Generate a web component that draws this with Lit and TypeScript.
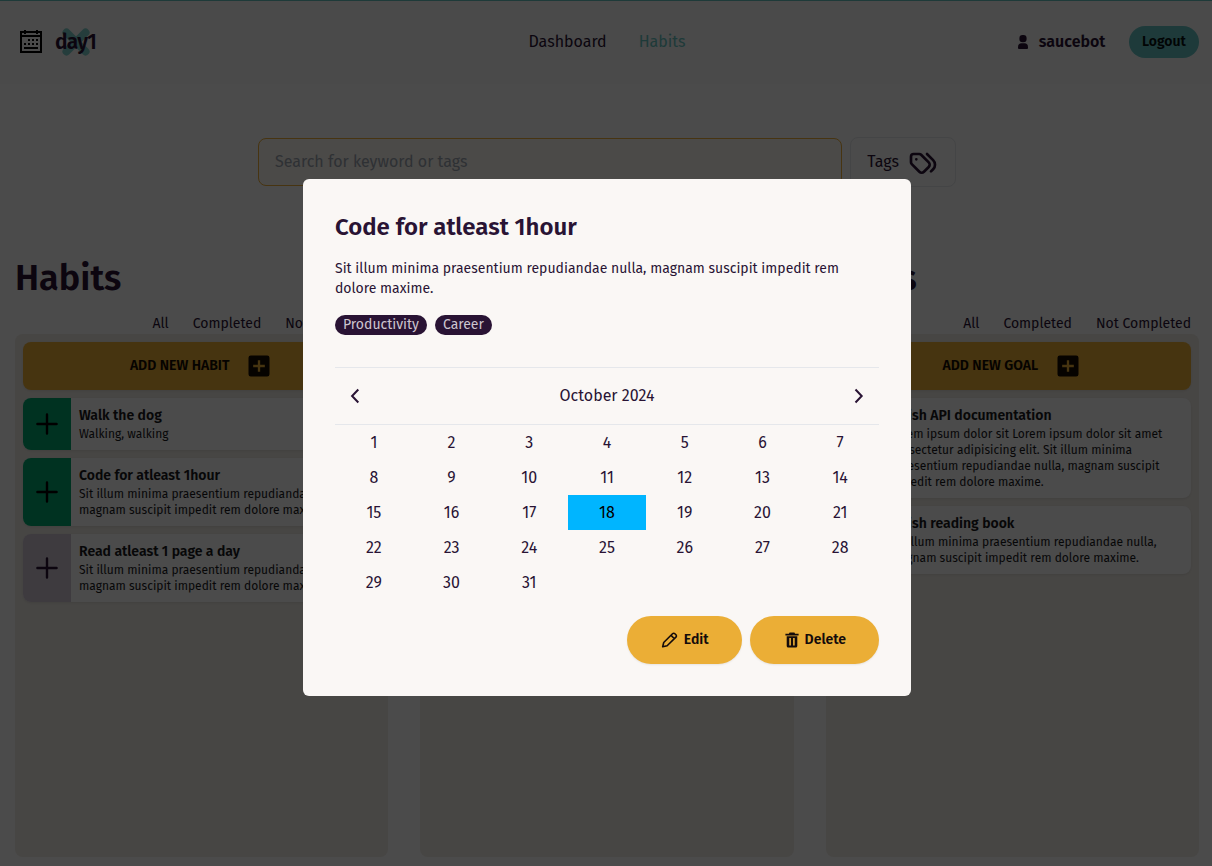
import { LitElement, html, css, svg } from "lit";
import { customElement } from "lit/decorators.js";

const LOREM = "Sit illum minima praesentium repudiandae nulla, magnam suscipit impedit rem dolore maxime.";

interface Entry { title: string; text: string; done: boolean; }

const habits: Entry[] = [
  { title: "Walk the dog", text: "Walking, walking", done: true },
  { title: "Code for atleast 1hour", text: LOREM, done: true },
  { title: "Read atleast 1 page a day", text: LOREM, done: false },
];
const goals: Entry[] = [
  {
    title: "Finish API documentation",
    text: "Lorem ipsum dolor sit Lorem ipsum dolor sit amet consectetur adipisicing elit. " + LOREM,
    done: false,
  },
  { title: "Finish reading book", text: LOREM, done: false },
];

const columns = [
  { name: "Habits", add: "Add new habit", entries: habits },
  { name: "Dailies", add: "Add new daily", entries: [] as Entry[] },
  { name: "Goals", add: "Add new goal", entries: goals },
];

const dots = [[8, 9], [12, 9], [16, 9], [4, 13], [8, 13], [12, 13], [16, 13]];

const calendarIcon = html`<svg width="22" height="23" viewBox="0 0 22 23" shape-rendering="crispEdges">
  <path fill-rule="evenodd" d="M0 1h22v22H0zM2 3v2h18V3zM2 7v14h18V7z" />
  <path d="M4 0h2v4H4zM16 0h2v4h-2zM4 17h14v2H4z" />
  ${dots.map(([x, y]) => svg`<rect x=${x} y=${y} width="2" height="2" />`)}
</svg>`;

const userIcon = html`<svg width="16" height="16" viewBox="0 0 16 16" fill="currentColor">
  <rect x="4.4" y="1" width="7.2" height="7.2" rx="3.2" />
  <path d="M3 13.2C3 10.4 4.5 9.3 6.2 9.3h3.6c1.7 0 3.2 1.1 3.2 3.9v.8a1 1 0 0 1-1 1H4a1 1 0 0 1-1-1z" />
</svg>`;

const tagsIcon = html`<svg width="32" height="32" viewBox="0 0 24 24" fill="none" stroke="currentColor" stroke-width="2" stroke-linecap="round" stroke-linejoin="round">
  <path d="M3 8v4.172a2 2 0 0 0 .586 1.414l5.71 5.71a2.41 2.41 0 0 0 3.408 0l3.592-3.592a2.41 2.41 0 0 0 0-3.408l-5.71-5.71A2 2 0 0 0 9.172 6H5a2 2 0 0 0-2 2z" />
  <path d="M18 19l1.592-1.592a4.82 4.82 0 0 0 0-6.816L15 6M7 10h-.01" />
</svg>`;

const plusBoxIcon = html`<svg width="28" height="28" viewBox="0 0 24 24" fill="currentColor">
  <path d="M5 3h14a2 2 0 0 1 2 2v14a2 2 0 0 1-2 2H5a2 2 0 0 1-2-2V5a2 2 0 0 1 2-2zm6 4v4H7v2h4v4h2v-4h4v-2h-4V7z" />
</svg>`;

const plusIcon = html`<svg width="24" height="24" viewBox="0 0 24 24" fill="none" stroke="currentColor" stroke-width="2.4" stroke-linecap="round">
  <path d="M12 2.4v19.2M2.4 12h19.2" />
</svg>`;

const chevron = (d: string) => html`<svg width="16" height="16" viewBox="0 0 16 16" fill="none" stroke="currentColor" stroke-width="2">
  <path d=${d} />
</svg>`;

const pencilIcon = html`<svg width="19" height="19" viewBox="0 0 24 24" fill="none" stroke="currentColor" stroke-width="2" stroke-linejoin="round">
  <path d="M3.4 19.9l1.3-5.4L15.8 3.4a2.1 2.1 0 0 1 3 0l1.3 1.3a2.1 2.1 0 0 1 0 3L9 18.6zM14 5.6l3.9 3.9" />
</svg>`;

const trashIcon = html`<svg width="16" height="16" viewBox="0 0 16 16" fill="currentColor">
  <path fill-rule="evenodd" d="M5.6 0.6h4.8l.7 1.2h3.5v1.7H1.4V1.8h3.5zM2.7 4.3h10.6v9.7a1.6 1.6 0 0 1-1.6 1.6H4.3a1.6 1.6 0 0 1-1.6-1.6zM5.3 6v7.6h1.6V6zM9.1 6v7.6h1.6V6z" />
</svg>`;

@customElement("app-root")
export class AppRoot extends LitElement {
  static styles = css`
    :host {
      display: block;
      position: relative;
      height: 866px;
      overflow: hidden;
      background: #fafafa;
      color: #291334;
      font: 16px/24px "Fira Sans", "Roboto", sans-serif;
    }
    * { box-sizing: border-box; }
    svg { display: block; flex: none; }
    h1, h2, h3, p { margin: 0; font-weight: 600; }
    p { font-weight: 400; }
    button {
      font: inherit;
      color: inherit;
      border: 0;
      padding: 0;
      background: none;
    }
    .page { height: 100%; display: flex; flex-direction: column; }
    .header {
      height: 84px;
      flex: none;
      display: grid;
      grid-template-columns: 1fr auto 1fr;
      align-items: center;
      padding: 0 13px 2px 20px;
      border-top: 1px solid #66c3bf;
      background: #f7f7f7;
    }
    .brand { display: flex; align-items: center; gap: 13px; color: #000; }
    .logo {
      position: relative;
      isolation: isolate;
      font-size: 21px;
      line-height: 28px;
      font-weight: 600;
      letter-spacing: -0.75px;
      color: #291334;
    }
    .cross { position: absolute; z-index: -1; left: 7px; top: 0; color: #7dccc9; }
    .nav { display: flex; gap: 32px; margin-right: 5px; }
    .active { color: #66c3bf; }
    .account { display: flex; align-items: center; justify-content: flex-end; }
    .user { display: flex; align-items: center; gap: 8px; font-weight: 600; margin-right: 23.6px; }
    .logout {
      height: 32px;
      width: 70px;
      border-radius: 16px;
      background: #66c3c3;
      color: #050f10;
      font-size: 14px;
      font-weight: 600;
    }
    .search { display: flex; align-items: center; gap: 8px; width: 698px; margin: 53px 0 71px 258px; }
    .field {
      flex: 1;
      height: 48px;
      min-width: 0;
      padding: 0 16px 2px;
      border: 1px solid #eeaf3a;
      border-radius: 8px;
      background: #faf7f0;
      font: inherit;
    }
    .field::placeholder { color: #9ca3af; opacity: 1; }
    .tags {
      display: flex;
      align-items: center;
      gap: 8px;
      height: 50px;
      padding: 0 16px;
      border: 1px solid #e5e7eb;
      border-radius: 8px;
    }
    .columns {
      flex: 1;
      min-height: 0;
      display: grid;
      grid-template-columns: repeat(3, 1fr);
      gap: 32px;
      padding: 0 13px 9px 15px;
    }
    .column { display: flex; flex-direction: column; min-width: 0; }
    .heading { font-size: 36px; line-height: 40px; }
    .tabs {
      display: flex;
      justify-content: flex-end;
      gap: 24px;
      padding: 16px 8px 0;
      font-size: 14px;
      line-height: 20px;
    }
    .panel {
      flex: 1;
      display: flex;
      flex-direction: column;
      gap: 8px;
      padding: 8px;
      border-radius: 8px;
      background: #ede9e3;
    }
    .add {
      display: flex;
      align-items: center;
      justify-content: center;
      gap: 16px;
      height: 48px;
      border-radius: 8px;
      background: #ebae36;
      color: #140b01;
      font-size: 14px;
      font-weight: 600;
      text-transform: uppercase;
      box-shadow: 0 1px 2px rgba(0, 0, 0, 0.08);
    }
    .card {
      display: flex;
      border-radius: 8px;
      overflow: hidden;
      background: #fafafa;
      color: #18181b;
      box-shadow: 0 1px 2px rgba(0, 0, 0, 0.08);
    }
    .check {
      width: 48px;
      flex: none;
      display: grid;
      place-items: center;
      background: #cfc5d3;
      color: #291334;
    }
    .done { background: #00a96e; color: #000; }
    .body { padding: 8px; font-size: 12px; line-height: 16px; }
    .name { font-size: 14px; line-height: 20px; }
    .overlay {
      position: absolute;
      inset: 0;
      display: flex;
      align-items: flex-start;
      padding: 179px 0 0 303px;
      background: rgba(0, 0, 0, 0.7);
    }
    .modal {
      width: 608px;
      height: 517px;
      padding: 32px;
      border-radius: 6px;
      background: #faf7f5;
    }
    .title { font-size: 24px; line-height: 32px; }
    .desc { margin-top: 16px; font-size: 14px; line-height: 20px; }
    .chips { display: flex; gap: 8px; margin-top: 16px; }
    .chip {
      height: 20px;
      padding: 0 8px;
      border-radius: 10px;
      background: #291334;
      color: #cdc5cf;
      font-size: 14px;
      line-height: 19px;
    }
    .month {
      display: flex;
      align-items: center;
      justify-content: space-between;
      height: 58px;
      margin-top: 32px;
      padding: 0 12px;
      border: solid #e5e7eb;
      border-width: 1px 0;
    }
    .days { display: grid; grid-template-columns: repeat(7, 1fr); grid-auto-rows: 35px; }
    .day { padding: 8px 0; text-align: center; line-height: 19px; }
    .today { background: #00b5ff; color: #000; }
    .actions { display: flex; justify-content: flex-end; gap: 8px; margin-top: 16px; }
    .action {
      display: flex;
      align-items: center;
      justify-content: center;
      gap: 4.6px;
      width: 129px;
      height: 48px;
      padding-left: 1px;
      border-radius: 24px;
      background: #ebae36;
      color: #140b0b;
      font-size: 14px;
      font-weight: 600;
      box-shadow: 0 1px 2px rgba(0, 0, 0, 0.08);
    }
    .edit { width: 115px; gap: 4.5px; padding-left: 0; }
  `;

  private card(entry: Entry) {
    return html`<div class="card">
      <button class="check ${entry.done ? "done" : ""}" aria-label="Toggle">${plusIcon}</button>
      <div class="body"><h3 class="name">${entry.title}</h3><p>${entry.text}</p></div>
    </div>`;
  }

  render() {
    return html`
      <div class="page">
        <header class="header">
          <div class="brand">
            ${calendarIcon}
            <span class="logo">
              <svg class="cross" width="28" height="28" viewBox="0 0 28 28" stroke="currentColor" stroke-width="8" stroke-linecap="round"><path d="M4.5 4.5l19 19M23.5 4.5l-19 19" /></svg>day1</span>
          </div>
          <nav class="nav"><span>Dashboard</span><span class="active">Habits</span></nav>
          <div class="account">
            <span class="user">${userIcon}saucebot</span>
            <button class="logout">Logout</button>
          </div>
        </header>
        <div class="search">
          <input class="field" placeholder="Search for keyword or tags" />
          <button class="tags">Tags${tagsIcon}</button>
        </div>
        <main class="columns">
          ${columns.map((c) => html`<section class="column">
            <h1 class="heading">${c.name}</h1>
            <div class="tabs"><span>All</span><span>Completed</span><span>Not Completed</span></div>
            <div class="panel">
              <button class="add"><span>${c.add}</span>${plusBoxIcon}</button>
              ${c.entries.map((e) => this.card(e))}
            </div>
          </section>`)}
        </main>
      </div>
      <div class="overlay">
        <div class="modal" role="dialog">
          <h2 class="title">Code for atleast 1hour</h2>
          <p class="desc">${LOREM}</p>
          <div class="chips"><span class="chip">Productivity</span><span class="chip">Career</span></div>
          <div class="month">
            ${chevron("M11.3 1.5L5.1 8l6.2 6.5")}<span>October 2024</span>${chevron("M4.5 1.5L10.7 8l-6.2 6.5")}
          </div>
          <div class="days">
            ${Array.from({ length: 31 }, (_, i) => html`<span class="day ${i === 17 ? "today" : ""}">${i + 1}</span>`)}
          </div>
          <div class="actions">
            <button class="action edit">${pencilIcon}<span>Edit</span></button>
            <button class="action">${trashIcon}<span>Delete</span></button>
          </div>
        </div>
      </div>
    `;
  }
}
